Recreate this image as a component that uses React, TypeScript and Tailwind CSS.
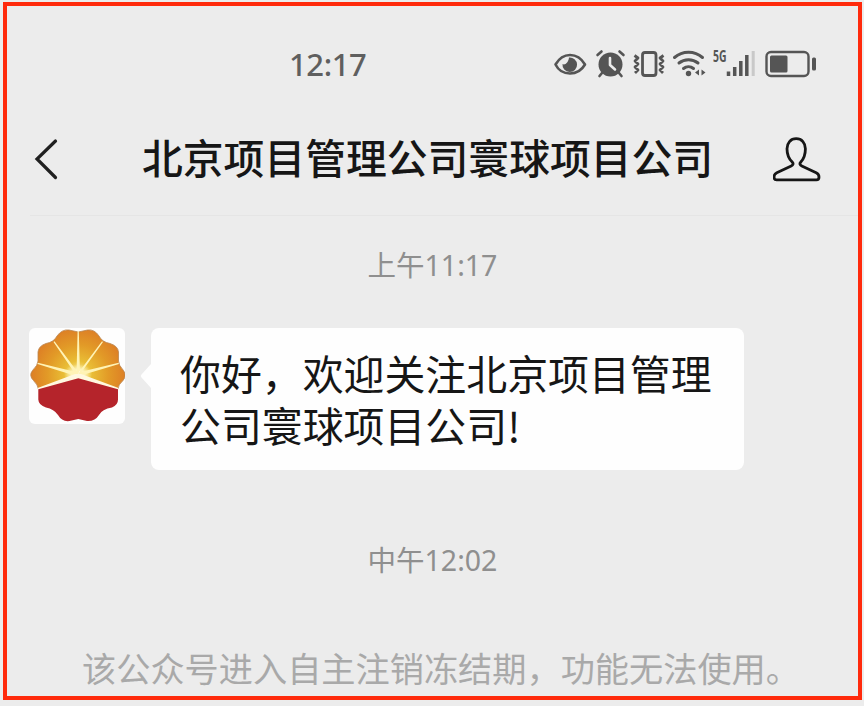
import type { ReactNode } from 'react'

// ── Status bar icons ─────────────────────────────────────────────────────────

function StatusIcons() {
  return (
    <svg width="266" height="32" viewBox="553 48 266 32" fill="none" className="text-[#555555]" aria-hidden>
      {/* Eye */}
      <path
        d="M555.5 64.5C559 58.500 564 55 570 55s11.500 3.500 15 9.500C581.500 70.500 576 73.500 570 73.500s-11.500-3-14.500-9z"
        stroke="currentColor"
        strokeWidth="2.600"
        strokeLinejoin="round"
      />
      <path d="M569 57.500a7.300 7.300 0 1 1-6.500 6.500c2.500 1.500 6-1.500 6.500-6.500z" fill="currentColor" />

      {/* Alarm clock */}
      <circle cx="610.500" cy="64.500" r="12" fill="currentColor" />
      <path
        d="M597.500 55l4-3.500M623.500 55l-4-3.500M602 73l-2.500 3M619 73l2.500 3"
        stroke="currentColor"
        strokeWidth="2.600"
        strokeLinecap="round"
      />
      <path d="M610 58v7l5 4.500" stroke="#ececec" strokeWidth="2.600" strokeLinecap="round" strokeLinejoin="round" />

      {/* Vibrate */}
      <rect x="642.500" y="52.500" width="13.500" height="23" rx="2.500" stroke="currentColor" strokeWidth="2.800" />
      <path
        d="M634.500 55.500l3.500 2.500-3 3 3 3-3 3 3 3-3 3M663.500 55.500l-3.500 2.500 3 3-3 3 3 3-3 3 3 3"
        stroke="currentColor"
        strokeWidth="2.800"
        strokeLinejoin="round"
      />

      {/* Wifi */}
      <path
        d="M674.500 57.500c8-7 20-7 28 0M679 63c5.500-4.500 13.500-4.500 19 0M683.500 68.500c3-2.500 7-2.500 10 0"
        stroke="currentColor"
        strokeWidth="3"
        strokeLinecap="round"
      />
      <circle cx="688.500" cy="73.500" r="2.700" fill="currentColor" />
      <path d="M695 72.500l4-3v6zM705.500 72.500l-4-3v6z" fill="currentColor" />

      {/* Signal bars */}
      <path d="M728.500 76v-4.500M734.700 76v-9M740.800 76v-15M746.800 76v-21" stroke="currentColor" strokeWidth="3.500" />
      <path d="M753.200 76V51" stroke="#c9c9c9" strokeWidth="3" />

      {/* Battery */}
      <rect x="766.500" y="52" width="42" height="24" rx="4.500" stroke="currentColor" strokeWidth="2.400" />
      <rect x="770" y="55.500" width="17.500" height="17" rx="1.500" fill="currentColor" />
      <rect x="812" y="57.500" width="4" height="13" rx="1.500" fill="currentColor" />
    </svg>
  )
}

function PersonIcon() {
  return (
    <svg width="48" height="46" viewBox="0 0 48 46" fill="none" className="mt-[4px]" aria-hidden>
      <path
        d="M23.200 1.700c-5.600 0-9.200 4.300-9.200 10 0 6 2.300 10.500 5.200 13.300 1.500 1.500 1 3.100-1 4L3.800 35.700c-2 1-2.800 2.300-2.800 4.200 0 2 .8 3 2.600 3h39.800c1.800 0 2.600-1 2.600-3 0-1.900-.8-3.200-2.800-4.200L28.800 29c-2-.9-2.500-2.500-1-4 2.600-2.800 4.600-7.300 4.600-13.300 0-5.700-3.600-10-9.200-10z"
        stroke="#161616"
        strokeWidth="2.800"
        strokeLinejoin="round"
      />
    </svg>
  )
}

// ── Account avatar ───────────────────────────────────────────────────────────

function Avatar() {
  return (
    <svg width="96" height="96" viewBox="0 0 96 96" className="shrink-0 rounded-md bg-[#fefefe]" aria-hidden>
      <defs>
        <radialGradient id="sun" gradientUnits="userSpaceOnUse" cx="49" cy="47" r="47">
          <stop offset="0" stopColor="#fff9c0" />
          <stop offset="0.300" stopColor="#e9bd35" />
          <stop offset="0.650" stopColor="#e29a27" />
          <stop offset="1" stopColor="#dd7f25" />
        </radialGradient>
        <radialGradient id="glow">
          <stop offset="0.250" stopColor="#fffef0" />
          <stop offset="1" stopColor="#fff6a0" stopOpacity="0" />
        </radialGradient>
      </defs>
      <path
        d="M9.300 61Q9 57 4.500 52.500Q-.5 47.500 3.500 42.500Q9 37 9 33V24Q9.500 18 17 15.500Q25 14 28 8Q33 1 40 2L49.300 4L58.500 2Q65.500 1 70 8Q73 14 81 15.500Q89 18 89.500 24V33Q89.500 37 94.500 42.500Q98 47.500 94 52.500Q89 57 89 61L49 50z"
        fill="url(#sun)"
        stroke="#b98550"
        strokeWidth="0.800"
      />
      <ellipse cx="49" cy="46" rx="14" ry="10" fill="url(#glow)" />
      <path
        d="M47.500 46L48.600 3h1.200L51 46zM47 47L24.500 14l1-.8L50 46zM50.500 47L74 14l-1-.8L48.500 46zM47 48L8.500 36l.4-1.200L49 44.500zM50 48L90 36l-.4-1.200L49 44.500z"
        fill="#fff3b5"
      />
      <path d="M9 62l-.4-2L46 46h6l37.500 14-.4 2L49 51z" fill="#fff8df" />
      <path
        d="M9.300 61.200L49.300 50.300L89 61.200V71.500Q89 77 83 79.500Q73 81 70 87Q66 93.500 58 93L49.300 91L40.500 93Q33 94 29 87Q25 81 17 79.500Q9.500 77 9.300 71.500z"
        fill="#b5242b"
      />
    </svg>
  )
}

// ── Chat ─────────────────────────────────────────────────────────────────────

function Timestamp({ children }: { children: ReactNode }) {
  return (
    <div className="text-center font-['Noto_Sans','Noto_Sans_CJK_SC',sans-serif] text-[28.500px] leading-[40px] text-[#8f8f8f]">
      {children}
    </div>
  )
}

export default function App() {
  return (
    <div className="h-[706px] w-[864px] bg-[#ececec] pl-[3px] pt-[2px] font-['Noto_Sans_CJK_SC','Noto_Sans',sans-serif]">
      <div className="flex h-[698px] w-[859px] flex-col border-4 border-[#ff2a0c] whitespace-nowrap">
        {/* Status bar */}
        <div className="flex h-[80px] items-start pt-[38px]">
          <div className="ml-[282px] w-[264px] font-['Noto_Sans',sans-serif] text-[31px] leading-[40px] font-medium tracking-[-0.400px] text-[#5f5f5f]">
            12:17
          </div>
          <div className="relative mt-[4px]">
            <StatusIcons />
            <span className="absolute left-[160px] top-[-1px] font-['Open_Sans',sans-serif] text-[16px] leading-[18px] font-bold text-[#555555] origin-left scale-x-[0.65]">
              5G
            </span>
          </div>
        </div>

        {/* Title bar */}
        <header className="ml-[23px] flex h-[130px] items-center border-b border-[#e5e5e5] pt-[14px]">
          <svg width="32" height="44" viewBox="0 0 32 44" fill="none" className="mt-[2px] shrink-0" aria-hidden>
            <path d="M25.500 4L7 22L25.500 40.500" stroke="#202020" strokeWidth="3.200" strokeLinecap="round" />
          </svg>
          <h1 className="ml-[80px] w-[631px] pb-px text-[40.800px] leading-[60px] font-medium text-[#161616]">
            北京项目管理公司寰球项目公司
          </h1>
          <PersonIcon />
        </header>

        <main className="pt-[29px]">
          <Timestamp>上午11:17</Timestamp>

          <div className="mt-[43px] flex items-start pl-[22px]">
            <Avatar />
            <div className="flex pl-[15px]">
              <svg width="11" height="96" viewBox="0 0 11 96" aria-hidden>
                <path d="M11 36L1.500 46.500Q0 48 1.500 49.500L11 60z" fill="#fefefe" />
              </svg>
              <div className="h-[142px] w-[593px] rounded-lg bg-[#fefefe] pl-[29px] pt-[19px] text-[40.900px] leading-[52px] text-[#161616]">
                你好，欢迎关注北京项目管理
                <br />
                公司寰球项目公司!
              </div>
            </div>
          </div>

          <div className="mt-[70px]">
            <Timestamp>中午12:02</Timestamp>
          </div>

          <p className="mt-[62px] pl-[75px] text-[34.200px] leading-[50px] text-[#a9a9a9]">
            该公众号进入自主注销冻结期，功能无法使用。
          </p>
        </main>
      </div>
    </div>
  )
}
